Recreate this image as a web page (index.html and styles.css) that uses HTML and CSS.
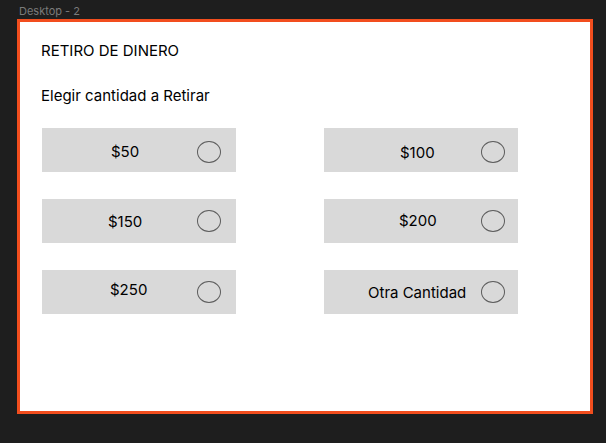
FILE: index.html
```html
<!DOCTYPE html>
<html lang="es">
<head>
<meta charset="utf-8">
<title>Desktop - 2</title>
<link rel="stylesheet" href="styles.css">
</head>
<body>
  <div class="frame-label">Desktop - 2</div>
  <main class="frame">
    <h1 class="title">RETIRO DE DINERO</h1>
    <p class="subtitle">Elegir cantidad a Retirar</p>
    <div class="options">
      <div class="opt row1"><span class="opt-label l50">$50</span><span class="opt-radio"></span></div>
      <div class="opt row1 right"><span class="opt-label l100">$100</span><span class="opt-radio"></span></div>
      <div class="opt row2"><span class="opt-label l150">$150</span><span class="opt-radio"></span></div>
      <div class="opt row2 right"><span class="opt-label l200">$200</span><span class="opt-radio"></span></div>
      <div class="opt row3"><span class="opt-label l250">$250</span><span class="opt-radio"></span></div>
      <div class="opt row3 right"><span class="opt-label lotra">Otra Cantidad</span><span class="opt-radio"></span></div>
    </div>
  </main>
</body>
</html>
```
FILE: styles.css
```css
html, body {
  margin: 0;
  padding: 0;
  background: #1e1e1e;
  font-family: Inter, "Noto Sans", sans-serif;
}

.frame-label {
  height: 19px;
  box-sizing: border-box;
  padding: 5px 0 0 19px;
  font-size: 11px;
  line-height: 13px;
  color: #7b7b7b;
}

.frame {
  margin-left: 17px;
  width: 576px;
  height: 395px;
  box-sizing: border-box;
  border: 3px solid #f24e1e;
  background: #ffffff;
  padding: 19px 0 0 21px;
  color: #000;
}

.title {
  margin: 0;
  font-size: 15px;
  font-weight: 400;
  line-height: 20px;
}

.subtitle {
  margin: 25px 0 0;
  font-size: 15px;
  line-height: 20px;
}

.options {
  margin-top: 22px;
  margin-left: 1px;
  display: grid;
  grid-template-columns: 194px 194px;
  column-gap: 88px;
  row-gap: 27px;
}

.opt {
  display: flex;
  align-items: flex-start;
  height: 44px;
  background: #d9d9d9;
  font-size: 15px;
  line-height: 18px;
}

.opt-radio {
  margin-left: auto;
  margin-right: 15px;
  margin-top: 11px;
  width: 24px;
  height: 22px;
  box-sizing: border-box;
  border: 1px solid #5c5c5c;
  border-radius: 50%;
}

.row1 .opt-radio { margin-top: 13px; }
.right .opt-radio { margin-right: 13px; }

.l50 { padding: 15px 0 0 69px; }
.l100 { padding: 16px 0 0 76px; }
.l150 { padding: 14px 0 0 66px; }
.l200 { padding: 13px 0 0 75px; }
.l250 { padding: 11px 0 0 68px; }
.lotra { padding: 14px 0 0 44px; }
```
